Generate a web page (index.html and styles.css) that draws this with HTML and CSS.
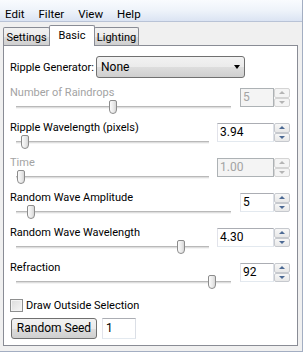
FILE: index.html
```html
<!DOCTYPE html>
<html lang="en">
<head>
    <meta charset="UTF-8">
    <title>Ripple</title>
    <link rel="stylesheet" href="styles.css">
</head>
<body>
    <div class="window">
        <div class="menubar">
            <span class="menu-item">Edit</span>
            <span class="menu-item">Filter</span>
            <span class="menu-item">View</span>
            <span class="menu-item">Help</span>
        </div>

        <div class="tabs">
            <div class="tab tab-settings">Settings</div>
            <div class="tab tab-basic tab-active">Basic</div>
            <div class="tab tab-lighting">Lighting</div>
        </div>

        <div class="panel">
            <div class="gen-row">
                <span class="gen-label">Ripple Generator:</span>
                <div class="combo">
                    <span>None</span>
                    <span class="combo-arrow"></span>
                </div>
            </div>

            <div class="param disabled">
                <div class="param-label">Number of Raindrops</div>
                <div class="slider"><div class="track"></div><div class="thumb" style="left: 99px"></div></div>
                <div class="spin"><div class="spin-field">5</div><div class="spin-btns"><span class="spin-up"></span><span class="spin-down"></span></div></div>
            </div>

            <div class="param">
                <div class="param-label">Ripple Wavelength (pixels)</div>
                <div class="slider"><div class="track"></div><div class="thumb" style="left: 11px"></div></div>
                <div class="spin wide"><div class="spin-field">3.94</div><div class="spin-btns"><span class="spin-up"></span><span class="spin-down"></span></div></div>
            </div>

            <div class="param disabled">
                <div class="param-label">Time</div>
                <div class="slider"><div class="track"></div><div class="thumb" style="left: 7px"></div></div>
                <div class="spin wide"><div class="spin-field">1.00</div><div class="spin-btns"><span class="spin-up"></span><span class="spin-down"></span></div></div>
            </div>

            <div class="param">
                <div class="param-label">Random Wave Amplitude</div>
                <div class="slider"><div class="track"></div><div class="thumb" style="left: 17px"></div></div>
                <div class="spin"><div class="spin-field">5</div><div class="spin-btns"><span class="spin-up"></span><span class="spin-down"></span></div></div>
            </div>

            <div class="param">
                <div class="param-label">Random Wave Wavelength</div>
                <div class="slider"><div class="track"></div><div class="thumb" style="left: 167px"></div></div>
                <div class="spin wide"><div class="spin-field">4.30</div><div class="spin-btns"><span class="spin-up"></span><span class="spin-down"></span></div></div>
            </div>

            <div class="param">
                <div class="param-label">Refraction</div>
                <div class="slider"><div class="track"></div><div class="thumb" style="left: 198px"></div></div>
                <div class="spin"><div class="spin-field">92</div><div class="spin-btns"><span class="spin-up"></span><span class="spin-down"></span></div></div>
            </div>

            <label class="check-row">
                <span class="checkbox"></span>
                <span>Draw Outside Selection</span>
            </label>

            <div class="seed-row">
                <div class="button">Random Seed</div>
                <div class="text-field">1</div>
            </div>
        </div>
    </div>
</body>
</html>
```

FILE: styles.css
```css
/* Basic reset */
* {
    margin: 0;
    padding: 0;
    box-sizing: border-box;
}

body {
    font-family: Roboto, 'Liberation Sans', sans-serif;
    font-size: 11px;
    line-height: 15px;
    color: #000;
    background-color: #f0f0f0;
    width: 303px;
    height: 352px;
    overflow: hidden;
    white-space: nowrap;
}

.window {
    height: 352px;
    border-right: 1px solid #a3aec2;
    border-bottom: 1px solid #a3aec2;
}

/* Menu bar */
.menubar {
    height: 22px;
    display: flex;
    gap: 14px;
    padding: 8px 0 0 5px;
    font-size: 11.5px;
    background: linear-gradient(#f9fbfe, #eef3fa 50%, #dbe4f3);
    border-bottom: 1px solid #b9c3d6;
}

.menu-item {
    line-height: 13px;
}

/* Tabs */
.tabs {
    height: 23px;
    display: flex;
    align-items: flex-end;
    padding-left: 3px;
}

.tab {
    height: 18px;
    margin-right: -1px;
    padding-top: 2px;
    text-align: center;
    border: 1px solid #898c95;
    border-bottom: none;
    border-radius: 2px 2px 0 0;
    background: linear-gradient(#f2f2f2, #ebebeb 50%, #dddddd 51%, #cfcfcf);
}

.tab-settings { width: 47px; }
.tab-basic { width: 46px; }
.tab-lighting { width: 45px; }

.tab-active {
    position: relative;
    z-index: 1;
    height: 21px;
    margin-bottom: -1px;
    padding-top: 2px;
    background: #fff;
}

/* Tab page */
.panel {
    height: 301px;
    margin: 0 4px 0 3px;
    padding: 0 7px 0 6px;
    border: 1px solid #898c95;
    background-color: #fff;
}

.gen-row {
    display: flex;
    align-items: center;
    height: 22px;
    margin-top: 10px;
}

.gen-label {
    width: 86px;
}

.combo {
    width: 149px;
    height: 22px;
    display: flex;
    align-items: center;
    justify-content: space-between;
    padding: 0 4px;
    font-size: 12px;
    border: 1px solid #707070;
    border-radius: 3px;
    background: linear-gradient(#f2f2f2, #ebebeb 50%, #dddddd 51%, #cfcfcf);
}

.combo-arrow {
    width: 0;
    height: 0;
    border-left: 3.5px solid transparent;
    border-right: 3.5px solid transparent;
    border-top: 4px solid #000;
}

/* Parameter rows: label and slider on the left, spin box on the right */
.param {
    display: grid;
    grid-template-columns: 1fr auto;
    grid-template-rows: 15px 20px;
}

.gen-row + .param {
    margin-top: 7px;
}

.param-label {
    grid-column: 1;
    grid-row: 1;
}

.slider {
    grid-column: 1;
    grid-row: 2;
    position: relative;
    margin-right: 9px;
}

.param:has(.wide) .slider {
    margin-right: 8px;
}

.track {
    margin: 6px 0 0 6px;
    height: 3px;
    border-top: 1px solid #b9b9b9;
    border-bottom: 1px solid #f4f4f4;
    background-color: #dedede;
}

.thumb {
    position: absolute;
    top: 0;
    width: 8px;
    height: 14px;
    border: 1px solid #8c8c8c;
    border-radius: 2px 2px 4px 4px;
    background: linear-gradient(to right, #fbfbfb, #e9e9e9 60%, #d6d6d6);
}

.spin {
    grid-column: 2;
    grid-row: 1 / 3;
    display: flex;
    height: 19px;
    margin-top: 3px;
}

.spin-field {
    width: 34px;
    height: 19px;
    padding-left: 2px;
    font-size: 12px;
    line-height: 17px;
    border: 1px solid;
    border-color: #abadb3 #dbdfe6 #e3e9ef #e2e3ea;
    background-color: #fff;
}

.spin.wide .spin-field {
    width: 57px;
}

.spin-btns {
    width: 16px;
    display: flex;
    flex-direction: column;
}

.spin-up,
.spin-down {
    flex: 1;
    display: flex;
    align-items: center;
    justify-content: center;
    border: 1px solid #c6c9ce;
    border-radius: 2px;
    background: linear-gradient(#f7f7f7, #e8e8e8);
}

.spin-up::after,
.spin-down::after {
    content: '';
    width: 0;
    height: 0;
    border-left: 3px solid transparent;
    border-right: 3px solid transparent;
}

.spin-up::after {
    border-bottom: 3px solid #4d6a94;
}

.spin-down::after {
    border-top: 3px solid #4d6a94;
}

/* Disabled rows */
.disabled .param-label {
    color: #a3a3a3;
}

.disabled .spin-field {
    color: #a3a3a3;
    background-color: #f4f4f4;
    border-color: #adb2b5;
}

.disabled .spin-up,
.disabled .spin-down {
    border-color: #d4d4d4;
    background: #f4f4f4;
}

.disabled .spin-up::after {
    border-bottom-color: #b4b4b4;
}

.disabled .spin-down::after {
    border-top-color: #b4b4b4;
}

/* Checkbox and seed */
.check-row {
    display: flex;
    align-items: center;
    gap: 3px;
    height: 13px;
    margin-top: 4px;
}

.checkbox {
    width: 13px;
    height: 13px;
    border: 1px solid #8e8f8f;
    background: linear-gradient(135deg, #dcdcdc, #f6f6f6);
    box-shadow: inset 0 0 0 1px #f4f4f4;
}

.seed-row {
    display: flex;
    gap: 5px;
    margin: 6px 0 0 1px;
}

.button {
    width: 86px;
    height: 21px;
    line-height: 19px;
    font-size: 12px;
    text-align: center;
    border: 1px solid #707070;
    border-radius: 3px;
    background: linear-gradient(#f2f2f2, #ebebeb 50%, #dddddd 51%, #cfcfcf);
}

.text-field {
    width: 34px;
    height: 21px;
    padding-left: 3px;
    font-size: 12px;
    line-height: 19px;
    border: 1px solid;
    border-color: #abadb3 #dbdfe6 #e3e9ef #e2e3ea;
    background-color: #fff;
}
```
